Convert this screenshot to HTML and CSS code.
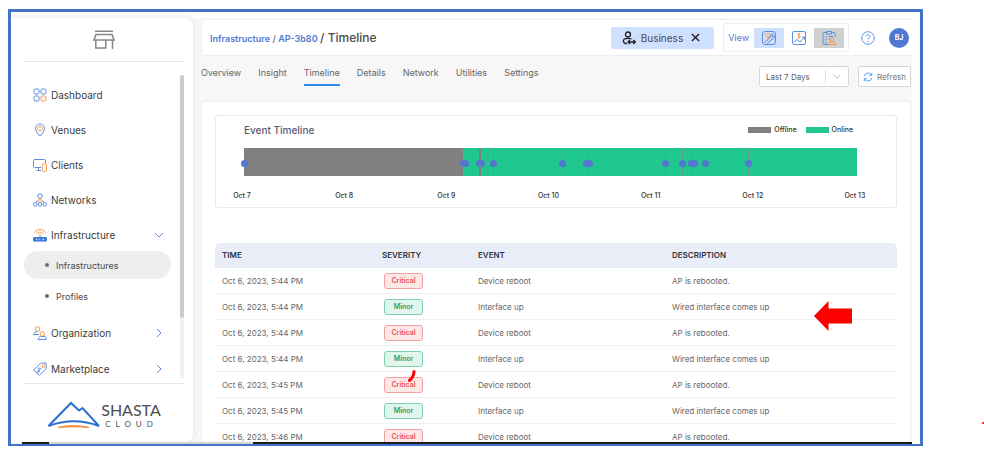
FILE: index.html
```html
<!DOCTYPE html>
<html lang="en">
<head>
    <meta charset="UTF-8">
    <meta name="viewport" content="width=device-width, initial-scale=1.0">
    <title>Timeline - Shasta Cloud</title>
    <link rel="stylesheet" href="styles.css">
</head>
<body>
    <div class="frame">
        <div class="app">
            <aside class="sidebar">
                <div class="sidebar-top">
                    <svg class="store-icon" viewBox="0 0 22 19">
                        <path d="M2 1.2h18M3 4.5h16l2 5.5H1zM2.8 10v8h10v-8M19.5 10v9" />
                    </svg>
                </div>
                <div class="nav-wrap">
                    <nav class="nav">
                        <a class="nav-item" href="#">
                            <svg viewBox="0 0 14 14"><rect x="1" y="1" width="5" height="5" rx="1.2" /><rect x="8" y="1" width="5" height="5" rx="1.2" /><rect x="1" y="8" width="5" height="5" rx="1.2" /><rect class="orange" x="8" y="8" width="5" height="5" rx="1.2" /></svg>
                            Dashboard
                        </a>
                        <a class="nav-item" href="#">
                            <svg viewBox="0 0 14 14"><path d="M7 13C4.500 10 2.500 8 2.500 5.500a4.500 4.500 0 0 1 9 0C11.500 8 9.500 10 7 13z" /><circle class="orange" cx="7" cy="5.500" r="2.300" /></svg>
                            Venues
                        </a>
                        <a class="nav-item" href="#">
                            <svg viewBox="0 0 14 14"><path d="M8 9.500H1.500a1 1 0 0 1-1-1v-6a1 1 0 0 1 1-1h10a1 1 0 0 1 1 1V5M5.500 9.500v3M3.500 12.500H8" /><rect class="orange" x="9.200" y="5.800" width="4.300" height="7.600" rx="1" /></svg>
                            Clients
                        </a>
                        <a class="nav-item" href="#">
                            <svg viewBox="0 0 14 14"><rect x="5" y="1" width="4" height="4" rx="1" /><path d="M5 7.500L2.500 9.500M9 7.500l2.500 2" /><circle cx="2.300" cy="11.300" r="1.800" /><circle cx="7" cy="11.300" r="1.800" /><circle cx="11.700" cy="11.300" r="1.800" /><path class="orange" d="M7 5v1M5.500 7.500a1.500 1.500 0 1 1 3 0a1.500 1.500 0 1 1-3 0M7 9v.6" /></svg>
                            Networks
                        </a>
                        <a class="nav-item" href="#">
                            <svg viewBox="0 0 14 14"><path class="orange" d="M1.500 4.500c3-4 8-4 11 0M3.500 6c2-2.500 5-2.500 7 0M5.500 7.300c1-1 2-1 3 0" /><rect class="solid" x=".5" y="9.500" width="13" height="3.500" rx=".5" /><path class="solid" d="M2 13v1M12 13v1M7 7.800v2" /><path class="white" d="M3 11.300h1M5.500 11.300h1M9.500 11.300h1.500" /></svg>
                            Infrastructure
                            <svg class="chevron" viewBox="0 0 10 10"><path d="M1 3l4 4 4-4" /></svg>
                        </a>
                        <a class="sub-item active" href="#">Infrastructures</a>
                        <a class="sub-item" href="#">Profiles</a>
                        <a class="nav-item lower" href="#">
                            <svg viewBox="0 0 14 14"><circle class="orange" cx="4.500" cy="3" r="2.300" /><path d="M6 8.500H.5C.5 6.500 2 5.800 4.500 5.800" /><circle class="orange" cx="9.300" cy="8" r="2.300" /><path d="M5 13.500c0-2 1.500-3 2.500-3h3.500c1.500 0 2.500 1 2.500 3z" /></svg>
                            Organization
                            <svg class="chevron" viewBox="0 0 10 10"><path d="M3 1l4 4-4 4" /></svg>
                        </a>
                        <a class="nav-item lower" href="#">
                            <svg viewBox="0 0 14 14"><path d="M7.500 1.300L13 .8l.4 5.500-7 7.100L.6 8z" /><circle class="orange" cx="10.500" cy="4" r="1.500" /><path d="M7.800 6.500c-2-1.500-3.500.5-2 1.500s.5 3-2 1.500M4 11l4-5" /></svg>
                            Marketplace
                            <svg class="chevron" viewBox="0 0 10 10"><path d="M3 1l4 4-4 4" /></svg>
                        </a>
                    </nav>
                    <div class="scrollbar"><div class="thumb"></div></div>
                </div>
                <div class="brand">
                    <svg viewBox="0 0 54 28">
                        <path class="mountain" d="M1.500 25L24 2l8 7.500 3.500-2.500L52 25C36 19 18 19 1.500 25z" />
                        <path class="glow" d="M11 26.500c10-2.500 20-2.500 31 0-10-1-20-1-31 0z" />
                    </svg>
                    <div class="brand-text">
                        <span class="brand-name">SHASTA</span>
                        <span class="brand-sub">CLOUD</span>
                    </div>
                </div>
            </aside>

            <main class="main">
                <header class="header">
                    <div class="breadcrumb">
                        <a href="#">Infrastructure</a> / <a href="#">AP-3b80</a> <span class="current">/ Timeline</span>
                    </div>
                    <div class="tag">
                        <svg viewBox="0 0 14 14"><circle cx="6" cy="3.500" r="2.500" /><path d="M5 12.500H3.500a2.500 2.500 0 0 1-1-4.500C4 7.200 8 7.200 9.500 8M6 11h7M8 9l-2 2 2 2M11.300 9l2 2-2 2" /></svg>
                        <span>Business</span>
                        <button class="tag-close" aria-label="Clear business"><svg viewBox="0 0 10 10"><path d="M1 1l8 8M9 1L1 9" /></svg></button>
                    </div>
                    <div class="view">
                        <span>View</span>
                        <button class="view-button selected" aria-label="Network view"><svg viewBox="0 0 14 14"><rect x=".5" y=".5" width="13" height="13" rx="2.500" /><path class="orange" d="M2 4.500c3-2.500 6-2 8 0M3.500 6.500c2-1.500 4-1 5 0M4 10l5-6" /><path d="M2.500 12l6-6c0-2 1.500-3.500 3-3l-1.500 2 1 1 2-1c0 2-1.500 3-3 3l-5 5" /></svg></button>
                        <button class="view-button" aria-label="Business view"><svg viewBox="0 0 14 14"><rect x=".5" y=".5" width="13" height="13" rx="1.500" /><path d="M2 11l3-2.500L8 11l4.500-5M10 6h2.500v2.500" /><path class="orange" d="M8.300 2.800C6 1.800 4.500 4 7 4.600s1.300 2.800-1.300 1.900M7 1.800v6" /></svg></button>
                        <button class="view-button disabled" aria-label="Task view"><svg viewBox="0 0 14 14"><path d="M6.500 13.500H2a1 1 0 0 1-1-1v-10a1 1 0 0 1 1-1h2.500M9.500 1.500H12a1 1 0 0 1 1 1V6M4.500.5h5v2.500h-5zM3 5.500l.7.700L5 5M6.500 5.500H11M3 8.500l.7.700L5 8M6.500 8H8M3 11.500l.7.700L5 11" /><circle class="orange" cx="10" cy="8.800" r="1.800" /><path class="orange" d="M7 13.500c0-4 6.500-4 6.500 0z" /></svg></button>
                    </div>
                    <button class="help" aria-label="Help"><svg viewBox="0 0 14 14"><circle cx="7" cy="7" r="6.300" /><path d="M5 5.500c0-2.500 4-2.500 4 0C9 7 7 7 7 8.500M7 10v1" /></svg></button>
                    <button class="avatar">BJ</button>
                </header>

                <div class="toolbar">
                    <nav class="tabs">
                        <a href="#">Overview</a>
                        <a href="#">Insight</a>
                        <a class="active" href="#">Timeline</a>
                        <a href="#">Details</a>
                        <a href="#">Network</a>
                        <a href="#">Utilities</a>
                        <a href="#">Settings</a>
                    </nav>
                    <div class="range">
                        <select aria-label="Time range">
                            <option>Last 7 Days</option>
                            <option>Last 30 Days</option>
                        </select>
                        <svg viewBox="0 0 10 10"><path d="M1 3l4 4 4-4" /></svg>
                    </div>
                    <button class="refresh">
                        <svg viewBox="0 0 12 12"><path d="M1.500 5a4.600 4.600 0 0 1 8.500-1.500M10.500 1v3h-3M10.500 7A4.600 4.600 0 0 1 2 8.500M1.500 11V8h3" /></svg>
                        Refresh
                    </button>
                </div>

                <section class="panel">
                    <div class="chart-card">
                        <div class="chart-head">
                            <h2>Event Timeline</h2>
                            <div class="legend">
                                <span class="swatch offline"></span>Offline
                                <span class="swatch online"></span>Online
                            </div>
                        </div>
                        <div class="timeline">
                            <div class="offline-span" style="width: 35.8%"></div>
                            <i class="tick strong" style="left: 38.4%"></i>
                            <i class="tick" style="left: 40.7%"></i>
                            <i class="tick faint" style="left: 51.9%"></i>
                            <i class="tick faint" style="left: 56%"></i>
                            <i class="tick" style="left: 68.7%"></i>
                            <i class="tick" style="left: 71.5%"></i>
                            <i class="tick" style="left: 72.9%"></i>
                            <i class="tick" style="left: 82.3%"></i>
                            <i class="dot" style="left: 0%"></i>
                            <i class="dot" style="left: 35.8%"></i>
                            <i class="dot" style="left: 36%"></i>
                            <i class="dot" style="left: 38.3%"></i>
                            <i class="dot" style="left: 38.7%"></i>
                            <i class="dot" style="left: 40.7%"></i>
                            <i class="dot" style="left: 51.9%"></i>
                            <i class="dot" style="left: 55.8%"></i>
                            <i class="dot" style="left: 56.3%"></i>
                            <i class="dot" style="left: 68.7%"></i>
                            <i class="dot" style="left: 71.5%"></i>
                            <i class="dot" style="left: 72.9%"></i>
                            <i class="dot" style="left: 73.4%"></i>
                            <i class="dot" style="left: 75.2%"></i>
                            <i class="dot" style="left: 82.3%"></i>
                        </div>
                        <div class="axis">
                            <span>Oct 7</span>
                            <span>Oct 8</span>
                            <span>Oct 9</span>
                            <span>Oct 10</span>
                            <span>Oct 11</span>
                            <span>Oct 12</span>
                            <span>Oct 13</span>
                        </div>
                    </div>

                    <table class="events">
                        <thead>
                            <tr><th class="col-time">TIME</th><th class="col-severity">SEVERITY</th><th class="col-event">EVENT</th><th>DESCRIPTION</th></tr>
                        </thead>
                        <tbody>
                            <tr><td>Oct 6, 2023, 5:44 PM</td><td><span class="badge critical">Critical</span></td><td>Device reboot</td><td>AP is rebooted.</td></tr>
                            <tr><td>Oct 6, 2023, 5:44 PM</td><td><span class="badge minor">Minor</span></td><td>Interface up</td><td>Wired interface comes up</td></tr>
                            <tr><td>Oct 6, 2023, 5:44 PM</td><td><span class="badge critical">Critical</span></td><td>Device reboot</td><td>AP is rebooted.</td></tr>
                            <tr><td>Oct 6, 2023, 5:44 PM</td><td><span class="badge minor">Minor</span></td><td>Interface up</td><td>Wired interface comes up</td></tr>
                            <tr><td>Oct 6, 2023, 5:45 PM</td><td><span class="badge critical">Critical</span></td><td>Device reboot</td><td>AP is rebooted.</td></tr>
                            <tr><td>Oct 6, 2023, 5:45 PM</td><td><span class="badge minor">Minor</span></td><td>Interface up</td><td>Wired interface comes up</td></tr>
                            <tr><td>Oct 6, 2023, 5:46 PM</td><td><span class="badge critical">Critical</span></td><td>Device reboot</td><td>AP is rebooted.</td></tr>
                        </tbody>
                    </table>
                </section>
            </main>
        </div>
        <div class="taskbar"><span class="taskbar-start"></span><span class="taskbar-gap"></span><span class="taskbar-rest"></span></div>

        <!-- red mark-up drawn over the page -->
        <svg class="arrow" viewBox="0 0 38 30"><path d="M0 15L14.500 0v7.500H38v15H14.500V30z" /></svg>
        <svg class="pen" viewBox="0 0 8 12"><path d="M6 1.500C6 5 4.500 8 1.500 10.500" /></svg>
    </div>
    <span class="speck"></span>
</body>
</html>
```

FILE: styles.css
```css
* {
    box-sizing: border-box;
}
body {
    margin: 0;
    background-color: #fff;
    color: #4a4a4a;
    font-family: Inter, "Open Sans", sans-serif;
    font-size: 8px;
    overflow: hidden;
}
a {
    color: inherit;
    text-decoration: none;
}
button {
    padding: 0;
    border: none;
    background: none;
    font-family: inherit;
    cursor: pointer;
}
svg {
    display: block;
    flex: none;
    fill: none;
    stroke: #5b8fe0;
    stroke-width: 1;
}
svg .orange {
    stroke: #f79a4b;
}
.frame {
    position: relative;
    display: flex;
    flex-direction: column;
    height: calc(100vh - 15px);
    margin: 9px 61px 6px 8px;
    padding: 6px 8px 0 0;
    border: 3px solid #4472c4;
    border-bottom-width: 2px;
    overflow: hidden;
}
.app {
    display: flex;
    flex: 1;
    min-height: 0;
    background-color: #f7f7f7;
}

/* sidebar */
.sidebar {
    display: flex;
    flex-direction: column;
    width: 182px;
    flex: none;
    padding: 0 9px 0 13px;
    background-color: #fff;
    border-radius: 0 8px 8px 0;
    box-shadow: 0 0 6px #e2e2e2;
}
.sidebar-top {
    display: flex;
    justify-content: center;
    height: 44px;
    padding-top: 12px;
    border-bottom: 1px solid #e6e6e6;
}
.store-icon {
    width: 22px;
    height: 19px;
    stroke: #80868b;
    stroke-width: 1.5;
}
.nav-wrap {
    display: flex;
    flex: 1;
    min-height: 0;
    padding: 13px 0 4px;
    gap: 9px;
}
.nav {
    flex: 1;
    overflow: hidden;
}
.nav-item {
    display: flex;
    align-items: center;
    gap: 4px;
    height: 35px;
    padding: 0 7px 0 9px;
    color: #3c3c3c;
    font-size: 10px;
}
.nav-item:first-child {
    margin-top: 2px;
}
.nav-item svg {
    width: 14px;
    height: 14px;
}
.nav-item .solid {
    fill: #3f7ad8;
    stroke: #3f7ad8;
}
.nav-item .white {
    stroke: #fff;
}
.nav-item .chevron {
    width: 10px;
    height: 10px;
    margin-left: auto;
}
.nav-item.lower {
    height: 36px;
}
.sub-item {
    display: flex;
    align-items: center;
    gap: 7px;
    height: 28px;
    margin-bottom: 3px;
    padding-left: 21px;
    border-radius: 14px;
    font-size: 9px;
}
.sub-item::before {
    content: "";
    width: 4px;
    height: 4px;
    border-radius: 50%;
    background-color: #6b6b6b;
}
.sub-item.active {
    margin-top: -1px;
    background-color: #eee;
}
.sub-item + .nav-item {
    margin-top: 5px;
}
.scrollbar {
    width: 4px;
    background-color: #f1f1f1;
}
.thumb {
    height: 80%;
    border-radius: 2px;
    background-color: #cbcbcb;
}
.brand {
    display: flex;
    justify-content: center;
    height: 59px;
    padding-top: 17px;
    border-top: 1px solid #e6e6e6;
}
.brand svg {
    width: 54px;
    height: 28px;
}
.brand .mountain {
    stroke: #2a70d4;
    stroke-width: 2;
}
.brand .glow {
    fill: #f58a33;
    stroke: #f58a33;
}
.brand-text {
    display: flex;
    flex-direction: column;
    font-family: Lato, sans-serif;
    color: #4c4c4c;
}
.brand-name {
    font-size: 16px;
    line-height: 18px;
}
.brand-sub {
    padding-left: 4px;
    font-size: 8px;
    line-height: 10px;
    letter-spacing: 5px;
}

/* main column */
.main {
    flex: 1;
    min-width: 0;
    padding: 1px 0 0 8px;
}
.header {
    display: flex;
    align-items: center;
    height: 37px;
    padding: 0 3px 0 8px;
    background-color: #fff;
    border: 1px solid #eee;
    border-right: none;
    border-radius: 4px 0 0 4px;
}
.breadcrumb {
    flex: 1;
    font-size: 9px;
    white-space: nowrap;
}
.breadcrumb a {
    color: #5078d2;
    font-weight: 600;
}
.breadcrumb .current {
    font-size: 12px;
    font-weight: 500;
}
.tag {
    display: flex;
    align-items: center;
    gap: 5px;
    height: 22px;
    padding: 0 14px 0 11px;
    border-radius: 2px;
    background-color: #cfe0ff;
    font-size: 10px;
}
.tag svg {
    width: 14px;
    height: 14px;
    stroke: #222;
    stroke-width: 1.3;
}
.tag-close {
    margin-left: 3px;
}
.tag-close svg {
    width: 9px;
    height: 9px;
    stroke-width: 1.6;
}
.view {
    display: flex;
    align-items: center;
    height: 29px;
    margin: 0 12px 0 9px;
    padding: 0 4px;
    border: 1px solid #eee;
    border-radius: 3px;
    color: #5078d2;
    font-size: 9px;
}
.view span {
    margin-right: 5px;
}
.view-button {
    display: flex;
    align-items: center;
    justify-content: center;
    width: 30px;
    height: 20px;
}
.view-button svg {
    width: 14px;
    height: 14px;
}
.view-button.selected {
    background-color: #cfe0ff;
}
.view-button.disabled {
    background-color: #d0d0d0;
}
.help svg {
    width: 14px;
    height: 14px;
}
.avatar {
    width: 20px;
    height: 20px;
    margin-left: 14px;
    border-radius: 50%;
    background-color: #5078d2;
    color: #fff;
    font-size: 7px;
    font-weight: 700;
}
.toolbar {
    display: flex;
    align-items: flex-end;
    height: 45px;
    padding: 0 1px 15px 0;
}
.tabs {
    display: flex;
    flex: 1;
    gap: 17px;
    font-size: 9px;
    color: #666;
}
.tabs a {
    height: 19px;
    line-height: 12px;
}
.tabs .active {
    border-bottom: 2px solid #2f8df0;
}
.toolbar .range {
    position: relative;
    margin-right: 9px;
}
.range,
.refresh {
    margin-bottom: -1px;
}
.range select {
    display: block;
    appearance: none;
    width: 90px;
    height: 21px;
    padding: 0 24px 0 6px;
    border: 1px solid #d6d6d6;
    border-radius: 2px;
    background-color: #fff;
    color: #5c5c5c;
    font-family: inherit;
    font-size: 8px;
}
.range svg {
    position: absolute;
    top: 4px;
    right: 1px;
    width: 23px;
    height: 13px;
    padding: 2px 0;
    border-left: 1px solid #ddd;
    stroke: #b5b5b5;
    pointer-events: none;
}
.refresh {
    display: flex;
    align-items: center;
    justify-content: center;
    gap: 4px;
    width: 53px;
    height: 21px;
    border: 1px solid #d6d6d6;
    border-radius: 2px;
    background-color: #fff;
    color: #777;
    font-size: 8px;
}
.refresh svg {
    width: 10px;
    height: 10px;
    stroke: #2f8df0;
}
.panel {
    margin-right: 1px;
    padding: 13px 13px 0;
    background-color: #fff;
    border: 1px solid #eee;
    border-radius: 4px;
}

/* event chart */
.chart-card {
    height: 93px;
    padding: 7px 39px 0 28px;
    border: 1px solid #ebebeb;
    border-radius: 3px;
}
.chart-head {
    display: flex;
    align-items: center;
    justify-content: space-between;
    height: 13px;
}
.chart-head h2 {
    margin: 0;
    color: #5c5874;
    font-size: 10px;
    font-weight: 500;
}
.legend {
    display: flex;
    align-items: center;
    margin-right: 4px;
    color: #333;
    font-size: 7px;
    font-weight: 500;
}
.swatch {
    width: 23px;
    height: 6px;
    margin: 0 3px 0 9px;
}
.swatch.offline {
    background-color: #808080;
}
.swatch.online {
    background-color: #20c78f;
}
.timeline {
    position: relative;
    height: 28px;
    margin-top: 12px;
    background-color: #20c78f;
}
.offline-span {
    height: 28px;
    background-color: #808080;
}
.tick {
    position: absolute;
    top: 0;
    width: 1px;
    height: 28px;
    background-color: #5f9c84;
}
.tick.strong {
    width: 2px;
    background-color: #808080;
}
.tick.faint {
    background-color: #2cb98b;
}
.dot {
    position: absolute;
    top: 12px;
    width: 7px;
    height: 7px;
    margin-left: -3px;
    border-radius: 50%;
    background-color: #5577cf;
}
.axis {
    display: flex;
    justify-content: space-between;
    margin: 15px -18px 0 -22px;
    color: #333;
    font-size: 7px;
    font-weight: 500;
    line-height: 9px;
}
.axis span {
    width: 40px;
    text-align: center;
}

/* event table */
.events {
    width: 100%;
    margin-top: 35px;
    border-spacing: 0;
    table-layout: fixed;
    color: #666;
}
.events th {
    height: 25px;
    padding: 0 0 1px 7px;
    background-color: #e8edf8;
    color: #2f3440;
    font-size: 8px;
    font-weight: 600;
    text-align: left;
}
.events th:first-child {
    border-top-left-radius: 5px;
}
.events th:last-child {
    border-top-right-radius: 5px;
}
.col-time {
    width: 160px;
}
.col-severity {
    width: 96px;
}
.col-event {
    width: 194px;
}
.events td {
    height: 26px;
    padding: 0 0 0 7px;
    border-bottom: 1px solid #efefef;
    white-space: nowrap;
}
.badge {
    display: block;
    width: 39px;
    margin-left: 2px;
    border: 1px solid;
    border-radius: 3px;
    font-size: 7px;
    font-weight: 600;
    line-height: 14px;
    text-align: center;
}
.badge.critical {
    border-color: #f3a0a0;
    background-color: #fde8e8;
    color: #e8545a;
}
.badge.minor {
    border-color: #7fd0b0;
    background-color: #e2f5ee;
    color: #1fa574;
}

/* strip along the bottom edge */
.taskbar {
    display: flex;
    flex: none;
    height: 2px;
    padding-left: 11px;
}
.taskbar-start {
    width: 27px;
    background-color: #1c1c1c;
}
.taskbar-gap {
    width: 204px;
    background-color: #d4d4d4;
}
.taskbar-rest {
    flex: 1;
    background-color: #1c1c24;
}
.arrow {
    position: absolute;
    top: 289px;
    right: 68px;
    width: 38px;
    height: 30px;
    fill: #f00;
    stroke: none;
}
.pen {
    position: absolute;
    top: 358px;
    left: 397px;
    width: 8px;
    height: 12px;
    stroke: #f00;
    stroke-width: 3;
    stroke-linecap: round;
}
.speck {
    position: absolute;
    top: 422px;
    right: 0;
    width: 2px;
    height: 2px;
    background-color: #e33;
}
```
